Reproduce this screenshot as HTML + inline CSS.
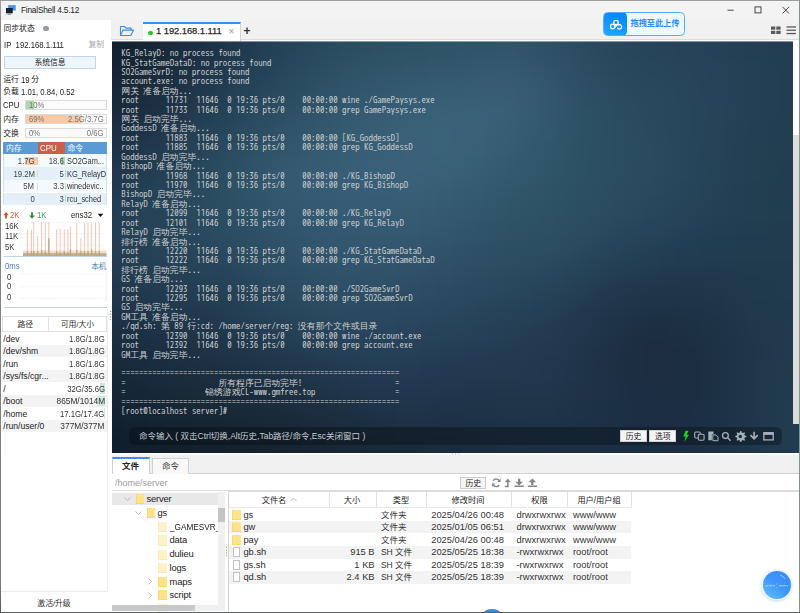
<!DOCTYPE html>
<html lang="zh-CN">
<head>
<meta charset="utf-8">
<title>FinalShell 4.5.12</title>
<style>
*{box-sizing:border-box;margin:0;padding:0}
html,body{width:800px;height:613px;overflow:hidden;background:#fff}
body{position:relative;font-family:"Liberation Sans","Noto Sans CJK SC",sans-serif;font-size:8px;color:#222;line-height:1}
.a{position:absolute}
.t{position:absolute;white-space:nowrap;line-height:10px;height:10px;letter-spacing:-.05px;font-size:7.850px;margin-top:.4px}
.l{font-size:8.6px;letter-spacing:0;margin-top:-.2px;transform:scaleX(.9);transform-origin:0 50%}
.r{text-align:right}.r.l{transform-origin:100% 50%}
.c{text-align:center}.c.l{transform-origin:50% 50%}
.g{color:#777}
.hw{color:#fff}
#win{position:absolute;left:0;top:0;width:800px;height:613px;background:#fff;overflow:hidden}
#bl{left:0;top:0;width:.9px;height:613px;background:linear-gradient(#a8a8a8 0,#8a8a8a 3%,#7a7d7d 95%,#50565a 100%)}
#bt{left:0;top:0;width:800px;height:1px;background:#9a9e9c}
#br{left:799px;top:0;width:1px;height:613px;background:#7f9486}
#bb{left:0;top:611.700px;width:800px;height:1.300px;background:#5a6065}
#title{left:1px;top:1px;width:798px;height:19px;background:#f3f3f3}
#left{left:1px;top:19.500px;width:110px;height:591.500px;background:#fff}
#tabbar{left:111px;top:20px;width:688px;height:20px;background:#f1f1f1;border-bottom:1px solid #dcdcdc}
#tab1{left:143px;top:22px;width:98px;height:18.500px;background:#fff;border-top:2px solid #3c8ef0;border-right:1px solid #d5d5d5}
#tab1 .dot{left:5px;top:6.500px;width:4.600px;height:4.600px;border-radius:50%;background:#1fc91f}
#tab1 .tt{left:13px;top:1.800px;font-size:9.400px;color:#2a2a2a;letter-spacing:-.05px;-webkit-text-stroke:.25px #2a2a2a}
#tab1 .x{left:85.500px;top:3px;font-size:10px;color:#9a9a9a}
#plus{left:243.500px;top:24.500px;font-size:12px;font-weight:bold;color:#333;line-height:12px;height:12px}
#up{left:603px;top:12px;width:81.600px;height:24px;border:1px solid #55acff;border-radius:4.500px;background:#f0f8ff;overflow:hidden}
#up .ic{left:-1px;top:-1px;width:23.600px;height:24px;border-radius:4.500px;background:linear-gradient(200deg,#068aff 20%,#25a8ff 100%)}
#up .tx{left:26.500px;top:6px;font-size:8.200px;font-weight:bold;color:#1e8fff}
.bar{position:absolute;left:25px;width:81.500px;height:10.300px;border:1px solid #dcdcdc;background:#fafafa}
.bar i{position:absolute;left:0;top:0;height:100%;display:block}
#sysbtn{left:4px;top:56.400px;width:92px;height:13px;background:#eef6fc;border:1px solid #c3d6e6}
#pt{left:3.200px;top:142px;width:103.600px;height:63.300px;border-bottom:1px solid #a9c9e6}
#pt .h{position:absolute;top:0;height:12.400px}
#pt .rw{position:absolute;left:0;width:103.600px;height:12.700px;border-left:1px solid #cfe0ee;border-right:1px solid #cfe0ee}
#dk{left:2.200px;top:315.600px;width:104.500px;height:116.500px}
#dk .hd{position:absolute;left:0;top:0;width:104.500px;height:16.200px;border:1px solid #e2e2e2;background:#fff}
#dk .rw{position:absolute;left:0;width:104.500px;height:12.540px}
#term{left:112px;top:41px;width:687px;height:412px;overflow:hidden;background:#1f364a}
#tx{left:9.300px;top:8.100px;font-family:"WenQuanYi Zen Hei Mono","IPAGothic","Noto Sans CJK SC",monospace;font-size:8.840px;line-height:9.426px;color:#d0d0d0;white-space:pre}
#cmd{left:17.300px;top:386.100px;width:652.700px;height:17.800px;border-radius:5.500px;background:rgba(2,6,10,.32)}
.cb{position:absolute;top:389.200px;height:12.300px;background:#f4f4f4;border:1px solid #cfcfcf}
#ftabs{left:112px;top:455.200px;width:687px;height:18.700px;background:#f0f0f0;border-bottom:1px solid #d2d2d2}
#ft1{left:112px;top:456.500px;width:38px;height:17.500px;background:#fff;border-top:2px solid #3c8ef0;border-left:1px solid #d0d0d0;border-right:1px solid #d0d0d0}
#ft2{left:152px;top:457.500px;width:37px;height:16px;background:#f8f8f8;border:1px solid #d0d0d0;border-bottom:none}
#pathbar{left:112px;top:474px;width:687px;height:17px;background:#fff;border-bottom:1px solid #dcdcdc}
#hist{left:460.300px;top:477px;width:26px;height:12.400px;background:#f5f5f5;border:1px solid #cdcdcd}
.f{font-size:9.350px;letter-spacing:0;line-height:11px;height:11px}
#tree{left:112px;top:491.500px;width:113px;height:119.500px;background:#fff;overflow:hidden}
#list{left:227.500px;top:491.300px;width:571.500px;height:120px;background:#fff;border-left:1px solid #d5d5d5;border-top:1px solid #dcdcdc}
.lr{position:absolute;left:228.500px;width:402px;height:12.540px;background:#f3f3f3}
.hv{position:absolute;top:492px;width:1px;height:15.500px;background:#e2e2e2}
#bg{left:-40px;top:-40px;width:782px;height:500px;filter:blur(9px)}#bg i{display:block;height:20px}
</style>
</head>
<body>
<div id="win">
<div class="a" id="title"></div>
<div class="a" id="left"></div>
<div class="a" id="tabbar"></div>
<div class="t" style="left:21px;top:5px;font-size:8.300px;letter-spacing:-.22px;color:#1a1a1a">FinalShell 4.5.12</div>
<svg class="a" style="left:5px;top:4px" width="13" height="12" viewBox="5 4 13 12"><rect x="8.200" y="5.200" width="7.500" height="5.300" fill="#3d95ec"/><rect x="6" y="8" width="6.700" height="5.300" fill="#1b1f2a"/><rect x="7.500" y="13.800" width="3.700" height=".8" fill="#666"/></svg>
<svg class="a" style="left:724px;top:2px" width="72" height="16" viewBox="724 2 72 16"><g stroke="#2a2a2a" stroke-width=".85" fill="none"><path d="M727.500 10.200h6.200"/><rect x="755" y="6.900" width="6" height="6"/><path d="M782.500 6.900l6.600 6.600M789.100 6.900l-6.600 6.600"/></g></svg>
<div class="a" id="up"><div class="a ic"></div><svg class="a" style="left:4px;top:4px" width="16" height="14" viewBox="607 16 16 14"><g fill="none" stroke="#fff" stroke-width="1.250"><circle cx="615" cy="21.600" r="2.300"/><circle cx="611.700" cy="25.400" r="2.200"/><path d="M616.800 24.300a2.200 2.200 0 1 1-.3 2.600"/><path d="M613.400 26.900l3.600-3.900"/></g></svg><div class="t tx">拖拽至此上传</div></div>
<svg class="a" style="left:770px;top:25px" width="28" height="11" viewBox="0 0 28 11"><g fill="#5a5a5a"><rect x="1" y="1.500" width="4.300" height="3.200"/><rect x="6.300" y="1.500" width="4.300" height="3.200"/><rect x="1" y="5.800" width="4.300" height="3.200"/><rect x="6.300" y="5.800" width="4.300" height="3.200"/><rect x="16.500" y="1.300" width="9.500" height="1.300"/><rect x="16.500" y="4.600" width="9.500" height="1.300"/><rect x="16.500" y="7.900" width="9.500" height="1.300"/></g></svg>
<svg class="a" style="left:119px;top:25px" width="16" height="12" viewBox="0 0 16 12"><path d="M1.500 10.500V1.500h4l1.500 1.600h5v2" fill="none" stroke="#3b8de8" stroke-width="1.100" stroke-linejoin="round"/><path d="M1.500 10.500l2.400-5.400h10.600l-2.700 5.400z" fill="none" stroke="#3b8de8" stroke-width="1.100" stroke-linejoin="round"/></svg>
<div class="a" id="tab1"><div class="a dot"></div><div class="t tt">1 192.168.1.111</div><div class="t x">×</div></div>
<div class="t" id="plus">+</div>
<div class="t " style="left:3.5px;top:23.8px;">同步状态</div>
<div class="a" style="left:43.4px;top:26.2px;width:5.2px;height:5.2px;background:#9c9c9c;border-radius:50%"></div>
<div class="t l" style="left:3.5px;top:40px;">IP&nbsp; 192.168.1.111</div>
<div class="t " style="left:88.5px;top:40px;color:#a8a8a8">复制</div>
<div class="a" id="sysbtn"></div>
<div class="t c " style="left:10px;width:80px;top:58px;">系统信息</div>
<div class="t " style="left:3.2px;top:75px;">运行</div>
<div class="t l" style="left:21.3px;top:75.2px;">19</div>
<div class="t " style="left:31.3px;top:75px;">分</div>
<div class="t " style="left:3.2px;top:86.7px;">负载</div>
<div class="t l" style="left:21.4px;top:86.9px;">1.01, 0.84, 0.52</div>
<div class="t l" style="left:3.2px;top:100.4px;">CPU</div>
<div class="bar" style="top:100.100px"><i style="width:8px;background:#a9dba9"></i></div>
<div class="t l g" style="left:28.6px;top:100.4px;">10%</div>
<div class="t " style="left:3.2px;top:114.2px;">内存</div>
<div class="bar" style="top:114px"><i style="width:56px;background:#f9c9a3"></i></div>
<div class="t l g" style="left:28.6px;top:114.4px;">69%</div>
<div class="t r l g" style="right:696.3px;top:114.4px;">2.5G/3.7G</div>
<div class="t " style="left:3.2px;top:128.2px;">交换</div>
<div class="bar" style="top:128px"></div>
<div class="t l g" style="left:28.6px;top:128.4px;">0%</div>
<div class="t r l g" style="right:696.3px;top:128.4px;">0/6G</div>
<div class="a" id="pt"><div class="h" style="left:0;width:35.300px;background:#5b9bd5"></div><div class="h" style="left:35.300px;width:26.800px;background:#c9604a"></div><div class="h" style="left:62.100px;width:41.500px;background:#5b9bd5"></div><div class="rw" style="top:12.400px;background:#f4f9fd"></div><div class="rw" style="top:25.100px;background:#e4eff8"></div><div class="rw" style="top:37.800px;background:#f4f9fd"></div><div class="rw" style="top:50.500px;background:#e4eff8"></div><div class="a" style="left:21.500px;top:15px;width:13.800px;height:8px;background:#f9c9a3"></div><div class="a" style="left:34.300px;top:28px;width:1px;height:7px;background:#f3d3b8"></div><div class="a" style="left:34.300px;top:40.500px;width:1px;height:7px;background:#f3d3b8"></div><div class="a" style="left:57.800px;top:15px;width:4.300px;height:8px;background:#a9dba9"></div><div class="a" style="left:61.400px;top:28px;width:.8px;height:7px;background:#b5dfb5"></div><div class="a" style="left:61.400px;top:40.500px;width:.8px;height:7px;background:#b5dfb5"></div><div class="a" style="left:61.400px;top:53px;width:.8px;height:7px;background:#b5dfb5"></div></div>
<div class="t hw" style="left:6px;top:143.3px;">内存</div>
<div class="t l hw" style="left:40.3px;top:142.9px;font-size:8.800px">CPU</div>
<div class="t hw" style="left:67.5px;top:143.3px;">命令</div>
<div class="t r l" style="right:765.6px;top:156.3px;color:#444">1.7G</div>
<div class="t r l" style="right:735.8px;top:156.3px;color:#444">18.6</div>
<div class="t l" style="left:67.2px;top:156.3px;color:#333;transform:scaleX(.86)">SO2Gam...</div>
<div class="t r l" style="right:765.6px;top:168.97px;color:#444">19.2M</div>
<div class="t r l" style="right:735.8px;top:168.97px;color:#444">5</div>
<div class="t l" style="left:67.2px;top:168.97px;color:#333;transform:scaleX(.86)">KG_RelayD</div>
<div class="t r l" style="right:765.6px;top:181.64px;color:#444">5M</div>
<div class="t r l" style="right:735.8px;top:181.64px;color:#444">3.3</div>
<div class="t l" style="left:67.2px;top:181.64px;color:#333;transform:scaleX(.86)">winedevic..</div>
<div class="t r l" style="right:765.6px;top:194.31px;color:#444">0</div>
<div class="t r l" style="right:735.8px;top:194.31px;color:#444">3</div>
<div class="t l" style="left:67.2px;top:194.31px;color:#333;transform:scaleX(.86)">rcu_sched</div>
<svg class="a" style="left:3px;top:211px" width="45" height="9" viewBox="0 0 45 9"><path d="M3 1L0.300 4.300h1.800v3.200h1.800V4.300h1.800z" fill="#c8501e"/><path d="M29 7.800l-2.700-3.300h1.800V1.300h1.800v3.200h1.800z" fill="#2c8a2c"/></svg>
<div class="t l" style="left:10px;top:210.4px;color:#b5613c">2K</div>
<div class="t l" style="left:37px;top:210.4px;color:#3a9a5a">1K</div>
<div class="t l" style="left:71px;top:210.4px;">ens32</div>
<svg class="a" style="left:96.500px;top:213px" width="7" height="5" viewBox="0 0 7 5"><path d="M0.700 0.800h5.600L3.500 4z" fill="#111"/></svg>
<div class="t l" style="left:5.4px;top:220.8px;color:#333">16K</div>
<div class="t l" style="left:5.4px;top:231.1px;color:#333">11K</div>
<div class="t l" style="left:5.4px;top:242.4px;color:#333">5K</div>
<svg class="a" style="left:23px;top:222px" width="84" height="35" viewBox="23 222 84 35"><path d="M23 222.5H106.500" stroke="#e3e3e3" stroke-width=".6" stroke-dasharray="1 1.500"/><path d="M23 233.5H106.500" stroke="#e3e3e3" stroke-width=".6" stroke-dasharray="1 1.500"/><path d="M23 245H106.500" stroke="#e3e3e3" stroke-width=".6" stroke-dasharray="1 1.500"/><rect x="23" y="250.500" width="83.500" height="5.700" fill="#fad9cc"/><rect x="26.79" y="229.24" width="1" height="26.96" fill="#f7c3b1"/><rect x="30.92" y="230.13" width="1" height="26.07" fill="#f7c3b1"/><rect x="33.25" y="222.06" width="1" height="34.14" fill="#f7c3b1"/><rect x="37.2" y="235.52" width="1" height="20.68" fill="#f7c3b1"/><rect x="41.15" y="222.06" width="1" height="34.14" fill="#f7c3b1"/><rect x="44.74" y="222.95" width="1" height="33.25" fill="#f7c3b1"/><rect x="48.33" y="222.06" width="1" height="34.14" fill="#f7c3b1"/><rect x="56.05" y="229.24" width="1" height="26.96" fill="#f7c3b1"/><rect x="59.64" y="228.34" width="1" height="27.86" fill="#f7c3b1"/><rect x="63.77" y="229.24" width="1" height="26.96" fill="#f7c3b1"/><rect x="67.36" y="229.24" width="1" height="26.96" fill="#f7c3b1"/><rect x="69.88" y="226.54" width="1" height="29.66" fill="#f7c3b1"/><rect x="76.34" y="222.95" width="1" height="33.25" fill="#f7c3b1"/><rect x="80.29" y="238.21" width="1" height="17.99" fill="#f7c3b1"/><rect x="83.88" y="222.95" width="1" height="33.25" fill="#f7c3b1"/><rect x="87.47" y="222.95" width="1" height="33.25" fill="#f7c3b1"/><rect x="91.06" y="222.95" width="1" height="33.25" fill="#f7c3b1"/><rect x="95.01" y="222.95" width="1" height="33.25" fill="#f7c3b1"/><rect x="98.78" y="222.95" width="1" height="33.25" fill="#f7c3b1"/><rect x="23" y="253.200" width="83.500" height="3" fill="#bcb08a"/><rect x="26.69" y="251.2" width="1.300" height="5" fill="#b5a87c"/><rect x="30.82" y="251.2" width="1.300" height="5" fill="#b5a87c"/><rect x="33.15" y="251.2" width="1.300" height="5" fill="#b5a87c"/><rect x="37.1" y="251.2" width="1.300" height="5" fill="#b5a87c"/><rect x="41.05" y="250.2" width="1.300" height="6" fill="#b5a87c"/><rect x="44.64" y="251.2" width="1.300" height="5" fill="#b5a87c"/><rect x="48.23" y="238.2" width="1.300" height="18" fill="#b5a87c"/><rect x="55.95" y="251.2" width="1.300" height="5" fill="#b5a87c"/><rect x="59.54" y="252.2" width="1.300" height="4" fill="#b5a87c"/><rect x="63.67" y="251.2" width="1.300" height="5" fill="#b5a87c"/><rect x="67.26" y="252.2" width="1.300" height="4" fill="#b5a87c"/><rect x="69.78" y="249.2" width="1.300" height="7" fill="#b5a87c"/><rect x="76.24" y="250.2" width="1.300" height="6" fill="#b5a87c"/><rect x="80.19" y="251.2" width="1.300" height="5" fill="#b5a87c"/><rect x="83.78" y="251.2" width="1.300" height="5" fill="#b5a87c"/><rect x="87.37" y="251.2" width="1.300" height="5" fill="#b5a87c"/><rect x="90.96" y="249.2" width="1.300" height="7" fill="#b5a87c"/><rect x="94.91" y="251.2" width="1.300" height="5" fill="#b5a87c"/><rect x="98.68" y="251.2" width="1.300" height="5" fill="#b5a87c"/></svg>
<div class="a" style="left:3.5px;top:256.3px;width:103px;height:1px;background:#bcd3ea;"></div>
<div class="t l" style="left:4.5px;top:261.6px;color:#4a80b8">0ms</div>
<div class="t r " style="right:693.7px;top:261.4px;color:#4a80b8;font-size:7.600px">本机</div>
<div class="t l" style="left:6.5px;top:271.7px;color:#333">0</div>
<div class="t l" style="left:6.5px;top:281.6px;color:#333">0</div>
<div class="t l" style="left:6.5px;top:292.3px;color:#333">0</div>
<svg class="a" style="left:19px;top:272px" width="88" height="30" viewBox="19 272 88 30"><g stroke="#e1e1e1" stroke-width=".7" stroke-dasharray="1 1.500"><path d="M20 274.200H106M20 286.700H106M20 298.400H106"/></g><path d="M106.200 272V302" stroke="#e6edf4" stroke-width=".8"/></svg>
<div class="a" style="left:3.5px;top:306.8px;width:103px;height:1px;background:#bcd3ea;"></div>
<div class="a" id="dk"><div class="hd"></div><div class="a" style="left:46px;top:0;width:1px;height:16px;background:#e2e2e2"></div><div class="rw" style="top:16.4px;background:#fff"></div><div class="rw" style="top:28.94px;background:#f3f3f3"></div><div class="rw" style="top:41.48px;background:#fff"></div><div class="rw" style="top:54.02px;background:#f3f3f3"></div><div class="rw" style="top:66.56px;background:#fff"></div><div class="rw" style="top:79.1px;background:#f3f3f3"></div><div class="rw" style="top:91.64px;background:#fff"></div><div class="rw" style="top:104.18px;background:#f3f3f3"></div><div class="a" style="left:97.800px;top:67.500px;width:5px;height:10.500px;background:#cfe6dc"></div><div class="a" style="left:94.600px;top:80px;width:8.200px;height:10.500px;background:#cfe6dc"></div><div class="a" style="left:102px;top:92.600px;width:.8px;height:10.500px;background:#cfe6dc"></div></div>
<div class="t c " style="left:5.3px;width:40px;top:319.4px;color:#333">路径</div>
<div class="t c " style="left:52.4px;width:50px;top:319.4px;color:#333">可用/大小</div>
<div class="t l" style="left:3.3px;top:333.9px;color:#222;transform:none">/dev</div>
<div class="t r l" style="right:695.3px;top:333.9px;color:#333">1.8G/1.8G</div>
<div class="t l" style="left:3.3px;top:346.44px;color:#222;transform:none">/dev/shm</div>
<div class="t r l" style="right:695.3px;top:346.44px;color:#333">1.8G/1.8G</div>
<div class="t l" style="left:3.3px;top:358.98px;color:#222;transform:none">/run</div>
<div class="t r l" style="right:695.3px;top:358.98px;color:#333">1.8G/1.8G</div>
<div class="t l" style="left:3.3px;top:371.52px;color:#222;transform:none">/sys/fs/cgr...</div>
<div class="t r l" style="right:695.3px;top:371.52px;color:#333">1.8G/1.8G</div>
<div class="t l" style="left:3.3px;top:384.06px;color:#222;transform:none">/</div>
<div class="t r l" style="right:695.3px;top:384.06px;color:#333">32G/35.6G</div>
<div class="t l" style="left:3.3px;top:396.6px;color:#222;transform:none">/boot</div>
<div class="t r l" style="right:695.3px;top:396.6px;color:#333;transform:scaleX(.97)">865M/1014M</div>
<div class="t l" style="left:3.3px;top:409.14px;color:#222;transform:none">/home</div>
<div class="t r l" style="right:695.3px;top:409.14px;color:#333">17.1G/17.4G</div>
<div class="t l" style="left:3.3px;top:421.68px;color:#222;transform:none">/run/user/0</div>
<div class="t r l" style="right:695.3px;top:421.68px;color:#333;transform:scaleX(.97)">377M/377M</div>
<div class="a" style="left:106.5px;top:308px;width:1px;height:283.5px;background:#ebebeb;"></div>
<div class="a" style="left:1px;top:591px;width:106.5px;height:1px;background:#ebebeb;"></div>
<svg class="a" style="left:108.500px;top:310px" width="3" height="11" viewBox="0 0 3 11"><g fill="#9a9a9a"><circle cx="1.500" cy="1.500" r=".7"/><circle cx="1.500" cy="4.200" r=".7"/><circle cx="1.500" cy="6.900" r=".7"/><circle cx="1.500" cy="9.600" r=".7"/></g></svg>
<div class="t c " style="left:24px;width:60px;top:599px;color:#333">激活/升级</div>
<div class="a" id="term">
<div class="a" id="bg"><i style="background:linear-gradient(90deg,#12202e,#12202e,#142433,#18293c,#1c3145,#1f394d,#234054,#27475b,#2a4c5f,#2b4f62,#2d5164,#2d5265,#2f5368,#305368,#2e4f65,#2b4a5f,#28465b,#274459,#264257,#254056,#243f54,#233e52,#233d51,#233d51)"></i><i style="background:linear-gradient(90deg,#12202e,#12202e,#142433,#18293c,#1c3145,#1f394d,#234054,#27475b,#2a4c5f,#2b4f62,#2d5164,#2d5265,#2f5368,#305368,#2e4f65,#2b4a5f,#28465b,#274459,#264257,#254056,#243f54,#233e52,#233d51,#233d51)"></i><i style="background:linear-gradient(90deg,#12212f,#12212f,#152534,#192b3d,#1c3246,#203a4f,#244256,#28485c,#2b4d61,#2d5064,#2e5266,#2f5367,#30556a,#31556b,#2f5167,#2b4b60,#29475c,#27445a,#264258,#254156,#243f54,#233e52,#233e51,#233e51)"></i><i style="background:linear-gradient(90deg,#152333,#152333,#182738,#1b2e40,#1e354a,#223e53,#26455a,#2a4c60,#2d5165,#2f5569,#31576b,#32586d,#345970,#345970,#31546b,#2d4d63,#29485d,#28465b,#27445a,#264257,#244054,#233e52,#233e52,#233e52)"></i><i style="background:linear-gradient(90deg,#172637,#172637,#1a2a3b,#1d3144,#21394e,#244257,#28495d,#2c4f64,#305569,#32586e,#345b71,#355c73,#375d74,#375d74,#33576e,#2d4f65,#2a4a5f,#29475d,#27455b,#264258,#244054,#233e52,#233e51,#233e51)"></i><i style="background:linear-gradient(90deg,#19293b,#19293b,#1c2d40,#203548,#233e52,#27465b,#2b4d62,#2f5368,#32586e,#355c72,#375e75,#386077,#386077,#385e76,#32586e,#2d5165,#2a4c60,#29485e,#28465b,#264358,#244054,#233e51,#223e51,#223e51)"></i><i style="background:linear-gradient(90deg,#1b2d41,#1b2d41,#1e3246,#223a4e,#254257,#294a5f,#2e5166,#32576c,#355b71,#375e75,#396178,#3a6279,#396078,#365d74,#31576c,#2c5165,#2b4d61,#29495e,#28465b,#264257,#233f53,#223e51,#223e50,#223e50)"></i><i style="background:linear-gradient(90deg,#1d3146,#1d3146,#20364b,#243e52,#27465a,#2c4e63,#30556b,#345a70,#365d74,#385f77,#3a6179,#3a6279,#375f76,#345b71,#2f566a,#2c5164,#2b4d61,#294a5f,#28465b,#254256,#233f52,#223e50,#223e50,#223e50)"></i><i style="background:linear-gradient(90deg,#1f354b,#1f354b,#223b50,#254256,#29495d,#2d5166,#32576e,#365b73,#375e76,#386078,#396179,#386077,#355d73,#32596d,#2e5568,#2c5064,#2b4d61,#2a4a5e,#27465b,#254256,#233f52,#223d50,#223d50,#223d50)"></i><i style="background:linear-gradient(90deg,#21394e,#21394e,#233f54,#274559,#2a4b5f,#2e5267,#32576e,#365b74,#375d76,#385e77,#385f77,#365d74,#335a6f,#30566a,#2e5366,#2c5063,#2b4c60,#29495e,#27455a,#244155,#223e51,#223d50,#213d4f,#213d4f)"></i><i style="background:linear-gradient(90deg,#233c51,#233c51,#254156,#27465b,#2a4b60,#2d5166,#31566d,#335972,#355b75,#365c75,#365c74,#345a71,#31576c,#2e5467,#2d5265,#2b4e62,#2a4a5f,#28475c,#264358,#244054,#223e51,#213d50,#213d4f,#213d4f)"></i><i style="background:linear-gradient(90deg,#243e52,#243e52,#254256,#27455a,#294a5f,#2c4f64,#2f536b,#31566f,#335972,#345a72,#345971,#32576d,#2f5469,#2d5165,#2d5063,#2b4c60,#28475c,#274459,#244056,#223e53,#213d50,#213c4f,#213d4f,#213d4f)"></i><i style="background:linear-gradient(90deg,#243d51,#243d51,#254055,#264459,#28475c,#2a4c61,#2d5067,#30546c,#31566e,#32566f,#31556d,#30536a,#2e5066,#2c4e63,#2b4d61,#29485d,#264358,#243f54,#223d52,#213c50,#213b4f,#213c4f,#213c4f,#213c4f)"></i><i style="background:linear-gradient(90deg,#223b4e,#223b4e,#243e53,#254056,#264358,#29485d,#2c4d63,#2e5168,#2f536a,#30536b,#2f5169,#2e4f66,#2c4c62,#2a4a5f,#29485d,#264358,#233e53,#223b4f,#20394e,#20394e,#203a4e,#213b4e,#213c4f,#213c4f)"></i><i style="background:linear-gradient(90deg,#21374a,#21374a,#223a4f,#223c52,#243f54,#264358,#2a495f,#2c4e63,#2d4f66,#2d4e66,#2d4d65,#2b4b62,#2a485f,#28465c,#274358,#243e53,#21384d,#1f364a,#1f3649,#1f374a,#20394c,#203b4e,#213c4e,#213c4e)"></i><i style="background:linear-gradient(90deg,#1e3346,#1e3346,#1f354b,#20384e,#223a50,#243f54,#27455a,#2a495e,#2b4a61,#2b4a62,#2a4960,#29475e,#28445b,#264258,#253f54,#21394f,#1f3449,#1d3245,#1d3245,#1e3547,#1f384a,#203a4d,#213b4e,#213b4e)"></i><i style="background:linear-gradient(90deg,#1c2f40,#1c2f40,#1c3146,#1e344a,#20364b,#223a4f,#243f54,#274358,#28455b,#28455d,#28445c,#274259,#264057,#253e54,#233b51,#20374c,#1d3245,#1c2f41,#1c3041,#1d3345,#1f3749,#213a4d,#213b4e,#213b4e)"></i><i style="background:linear-gradient(90deg,#1a2b3b,#1a2b3b,#1a2d41,#1c3045,#1e3346,#1f354a,#21394e,#243d52,#254056,#254158,#254057,#243e55,#243d53,#233b51,#22394f,#1f354a,#1d3044,#1b2d3f,#1b2e3f,#1d3244,#1f3649,#213a4d,#213c4e,#213c4e)"></i><i style="background:linear-gradient(90deg,#172838,#172838,#182a3c,#1a2d3f,#1c2f40,#1d3144,#1e3448,#20374c,#223a50,#233c53,#233c53,#223a50,#22394f,#22394e,#21374d,#1f3449,#1d3043,#1b2d3f,#1b2e3f,#1d3144,#1f3649,#213b4d,#213c4f,#213c4f)"></i><i style="background:linear-gradient(90deg,#152534,#152534,#162738,#182a3a,#1a2c3b,#1b2d3e,#1c2f42,#1d3245,#1f3549,#20374d,#20384e,#20364c,#20364b,#20364b,#20364b,#1f3348,#1d3044,#1b2d40,#1b2e40,#1d3144,#1f364a,#213b4e,#223c4f,#223c4f)"></i><i style="background:linear-gradient(90deg,#122332,#122332,#142434,#162635,#182836,#182939,#192b3b,#1b2d3e,#1c3043,#1d3347,#1e3449,#1e3348,#1e3348,#1f3448,#1f3449,#1e3247,#1c3044,#1b2e42,#1b2e42,#1d3145,#1f364a,#213b4f,#223d50,#223d50)"></i><i style="background:linear-gradient(90deg,#10202f,#10202f,#112130,#132331,#152432,#162533,#172735,#182938,#1a2b3c,#1b2e40,#1c2f42,#1c2f43,#1d3044,#1d3145,#1d3246,#1d3146,#1c2f45,#1b2e43,#1b2e43,#1c3146,#1f364b,#213c50,#223d51,#223d51)"></i><i style="background:linear-gradient(90deg,#0e1d2c,#0e1d2c,#0f1f2d,#11202d,#13212e,#14222f,#152330,#162533,#172736,#182938,#192a3a,#1a2c3d,#1b2d3f,#1c2e42,#1c2f44,#1c3044,#1b2f44,#1b2e43,#1b2e44,#1c3147,#1e364b,#213c50,#213d51,#213d51)"></i><i style="background:linear-gradient(90deg,#0e1d2c,#0e1d2c,#0f1f2d,#11202d,#13212e,#14222f,#152330,#162533,#172736,#182938,#192a3a,#1a2c3d,#1b2d3f,#1c2e42,#1c2f44,#1c3044,#1b2f44,#1b2e43,#1b2e44,#1c3147,#1e364b,#213c50,#213d51,#213d51)"></i><i style="background:linear-gradient(90deg,#0e1d2c,#0e1d2c,#0f1f2d,#11202d,#13212e,#14222f,#152330,#162533,#172736,#182938,#192a3a,#1a2c3d,#1b2d3f,#1c2e42,#1c2f44,#1c3044,#1b2f44,#1b2e43,#1b2e44,#1c3147,#1e364b,#213c50,#213d51,#213d51)"></i></div>
<pre class="a" id="tx">KG_RelayD: no process found
KG_StatGameDataD: no process found
SO2GameSvrD: no process found
account.exe: no process found
网关 准备启动...
root      11731  11646  0 19:36 pts/0    00:00:00 wine ./GamePaysys.exe
root      11733  11646  0 19:36 pts/0    00:00:00 grep GamePaysys.exe
网关 启动完毕...
GoddessD 准备启动...
root      11883  11646  0 19:36 pts/0    00:00:00 [KG_GoddessD]
root      11885  11646  0 19:36 pts/0    00:00:00 grep KG_GoddessD
GoddessD 启动完毕...
BishopD 准备启动...
root      11968  11646  0 19:36 pts/0    00:00:00 ./KG_BishopD
root      11970  11646  0 19:36 pts/0    00:00:00 grep KG_BishopD
BishopD 启动完毕...
RelayD 准备启动...
root      12099  11646  0 19:36 pts/0    00:00:00 ./KG_RelayD
root      12101  11646  0 19:36 pts/0    00:00:00 grep KG_RelayD
RelayD 启动完毕...
排行榜 准备启动...
root      12220  11646  0 19:36 pts/0    00:00:00 ./KG_StatGameDataD
root      12222  11646  0 19:36 pts/0    00:00:00 grep KG_StatGameDataD
排行榜 启动完毕...
GS 准备启动...
root      12293  11646  0 19:36 pts/0    00:00:00 ./SO2GameSvrD
root      12295  11646  0 19:36 pts/0    00:00:00 grep SO2GameSvrD
GS 启动完毕...
GM工具 准备启动...
./qd.sh: 第 89 行:cd: /home/server/reg: 没有那个文件或目录
root      12390  11646  0 19:36 pts/0    00:00:00 wine ./account.exe
root      12392  11646  0 19:36 pts/0    00:00:00 grep account.exe
GM工具 启动完毕...

===============================================================
=                     所有程序已启动完毕!                     =
=                  锦绣游戏CL-www.gmfree.top                  =
===============================================================
[root@localhost server]#</pre>
<div class="a" style="left:0;top:0;width:687px;height:1px;background:rgba(255,255,255,.45)"></div>
<div class="a" id="cmd"></div>
<div class="t" style="left:27px;top:389.500px;font-size:8.500px;color:#c4ccd4;letter-spacing:0">命令输入 ( 双击Ctrl切换,Alt历史,Tab路径/命令,Esc关闭窗口 )</div>
<div class="cb" style="left:508.100px;width:27px"></div><div class="cb" style="left:537.400px;width:26.600px"></div>
<div class="t c" style="left:508.100px;width:27px;top:390.500px;color:#222">历史</div><div class="t c" style="left:537.400px;width:26.600px;top:390.500px;color:#222">选项</div>
<svg class="a" style="left:568px;top:388px" width="96" height="15" viewBox="680 429 96 15">
<path d="M685.500 430.800h3l-1.700 4h2.200l-4.700 7 1.300-5.200h-2.300z" fill="#1fd01f"/>
<g fill="none" stroke="#a6b0b9" stroke-width="1.100"><rect x="694.700" y="432" width="5.600" height="6" rx="1.200"/><rect x="698.300" y="434.300" width="5.800" height="6" rx="1.200" fill="#172a3a"/></g>
<path d="M708.300 431.500h5.200v2.700h-1.600v6h-3.600z" fill="#a6b0b9"/><path d="M712.800 434.900h3.200l2 2v3.800h-5.200z" fill="#172a3a" stroke="#a6b0b9" stroke-width="1"/>
<g fill="none" stroke="#a6b0b9" stroke-width="1.300"><circle cx="725.400" cy="435.600" r="2.900"/><path d="M727.600 437.800l3 3"/></g>
<g fill="#a6b0b9"><path d="M740.250 431l1.100 0 .4 1.500 1.200.5 1.350-.8.800.8-.8 1.350.5 1.200 1.500.4v1.100l-1.500.4-.5 1.200.8 1.350-.8.800-1.350-.8-1.200.5-.4 1.500h-1.100l-.4-1.500-1.200-.5-1.350.8-.8-.8.800-1.350-.5-1.200-1.500-.4v-1.100l1.500-.4.500-1.200-.8-1.350.8-.8 1.350.8 1.200-.5z"/></g><circle cx="740.300" cy="436.500" r="1.700" fill="#172a3a"/>
<path d="M753.300 431.800h1.600v5l2.200-2.200 1.200 1.200-4.200 4.200-4.200-4.200 1.200-1.200 2.200 2.200z" fill="#a6b0b9"/>
<rect x="763.800" y="432.700" width="9.400" height="7.200" fill="none" stroke="#a6b0b9" stroke-width="1.300"/><rect x="763.800" y="432.700" width="9.400" height="2.200" fill="#a6b0b9"/>
</svg>
<div class="a" style="left:681px;top:0px;width:6px;height:383px;background:#fff;"></div>
<div class="a" style="left:681px;top:94px;width:5.5px;height:289px;background:#dcdcdc;"></div>
</div>
<div class="a" style="left:112px;top:452.6px;width:687px;height:2.8px;background:#fff;"></div>
<svg class="a" style="left:451px;top:453px" width="10" height="2" viewBox="451 453 10 2"><g fill="#9a9a9a"><circle cx="452.500" cy="454" r=".6"/><circle cx="455.700" cy="454" r=".6"/><circle cx="458.900" cy="454" r=".6"/></g></svg>
<div class="a" id="ftabs"></div><div class="a" id="ft1"></div><div class="a" id="ft2"></div>
<div class="t c " style="left:115.5px;width:30px;top:460.6px;font-weight:bold;color:#222;font-size:8.500px">文件</div>
<div class="t c " style="left:155.5px;width:30px;top:460.8px;color:#333;font-size:8.500px">命令</div>
<div class="a" id="pathbar"></div>
<div class="t f" style="left:114.9px;top:477.8px;color:#9a9a9a;font-size:9px">/home/server</div>
<div class="a" id="hist"></div>
<div class="t c " style="left:460.3px;width:26px;top:478.2px;color:#222">历史</div>
<svg class="a" style="left:490px;top:477px" width="49" height="12" viewBox="490 477 49 12"><g fill="none" stroke="#858585" stroke-width="1.400"><path d="M499.600 481.400a3.600 3.600 0 0 0-6.400-.7"/><path d="M492.900 484.300a3.600 3.600 0 0 0 6.400.7"/></g><path d="M500.600 478.800v3.300h-3.300zM491.900 486.900v-3.300h3.300z" fill="#858585"/>
<path d="M507.800 478.600l3 3.700h-2.200v4.900h-3.800v-1.400h2.300v-3.500h-2.300z" fill="#858585"/>
<path d="M518 478.700h2.300v3h2.700l-3.850 3.700-3.850-3.700h2.700zM514.400 485.600h9.400v1.500h-9.400z" fill="#858585"/>
<path d="M531.200 485h2.300v-2.700h2.700l-3.850-3.700-3.850 3.700h2.700zM527.700 485.600h9.400v1.500h-9.400z" fill="#858585"/></svg>
<div class="a" id="tree"></div>
<div class="a" style="left:112px;top:492.6px;width:106px;height:12.5px;background:#e8e8e8;"></div>
<div class="a" style="left:135.5px;top:493.9px;width:8.3px;height:10.2px;background:#ffe28a;border-left:1.500px solid #ffd764;border-bottom:1.500px solid #ffd764;border-radius:.5px"></div>
<div class="t f" style="left:146.5px;top:493.5px;color:#222;letter-spacing:-.15px">server</div>
<svg class="a" style="left:123.8px;top:495.5px" width="7" height="7" viewBox="0 0 7 7"><path d="M0.500 1.500L3.500 4.500 6.500 1.500" fill="none" stroke="#b5b5b5" stroke-width=".9"/></svg>
<div class="a" style="left:146.5px;top:508px;width:8.3px;height:10.2px;background:#ffe28a;border-left:1.500px solid #ffd764;border-bottom:1.500px solid #ffd764;border-radius:.5px"></div>
<div class="t f" style="left:157.5px;top:507.6px;color:#222;letter-spacing:-.15px">gs</div>
<svg class="a" style="left:135.3px;top:509.6px" width="7" height="7" viewBox="0 0 7 7"><path d="M0.500 1.500L3.500 4.500 6.500 1.500" fill="none" stroke="#b5b5b5" stroke-width=".9"/></svg>
<div class="a" style="left:158.3px;top:521.8px;width:8.3px;height:10.2px;background:#fff1c9;border-left:1.500px solid #ffe9a8;border-bottom:1.500px solid #ffe9a8;border-radius:.5px"></div>
<div class="t f" style="left:169.5px;top:521.4px;color:#222;transform:scaleX(.88);transform-origin:0 50%">_GAMESVR_</div>
<div class="a" style="left:158.3px;top:535.4px;width:8.3px;height:10.2px;background:#fff1c9;border-left:1.500px solid #ffe9a8;border-bottom:1.500px solid #ffe9a8;border-radius:.5px"></div>
<div class="t f" style="left:169.5px;top:535px;color:#222;letter-spacing:-.15px">data</div>
<div class="a" style="left:158.3px;top:549.5px;width:8.3px;height:10.2px;background:#fff1c9;border-left:1.500px solid #ffe9a8;border-bottom:1.500px solid #ffe9a8;border-radius:.5px"></div>
<div class="t f" style="left:169.5px;top:549.1px;color:#222;letter-spacing:-.15px">dulieu</div>
<div class="a" style="left:158.3px;top:563.1px;width:8.3px;height:10.2px;background:#fff1c9;border-left:1.500px solid #ffe9a8;border-bottom:1.500px solid #ffe9a8;border-radius:.5px"></div>
<div class="t f" style="left:169.5px;top:562.7px;color:#222;letter-spacing:-.15px">logs</div>
<div class="a" style="left:158.3px;top:576.7px;width:8.3px;height:10.2px;background:#ffe28a;border-left:1.500px solid #ffd764;border-bottom:1.500px solid #ffd764;border-radius:.5px"></div>
<div class="t f" style="left:169.5px;top:576.3px;color:#222;letter-spacing:-.15px">maps</div>
<svg class="a" style="left:146.8px;top:578.3px" width="7" height="7" viewBox="0 0 7 7"><path d="M1.500 0.500L4.500 3.500 1.500 6.500" fill="none" stroke="#b5b5b5" stroke-width=".9"/></svg>
<div class="a" style="left:158.3px;top:590.3px;width:8.3px;height:10.2px;background:#ffe28a;border-left:1.500px solid #ffd764;border-bottom:1.500px solid #ffd764;border-radius:.5px"></div>
<div class="t f" style="left:169.5px;top:589.9px;color:#222;letter-spacing:-.15px">script</div>
<svg class="a" style="left:146.8px;top:591.9px" width="7" height="7" viewBox="0 0 7 7"><path d="M1.500 0.500L4.500 3.500 1.500 6.500" fill="none" stroke="#b5b5b5" stroke-width=".9"/></svg>
<div class="a" style="left:158.3px;top:603.9px;width:8.3px;height:10.2px;background:#fff1c9;border-left:1.500px solid #ffe9a8;border-bottom:1.500px solid #ffe9a8;border-radius:.5px"></div>
<div class="a" style="left:218px;top:491.5px;width:7px;height:113.5px;background:#f0f0f0;"></div>
<div class="a" style="left:218px;top:507.8px;width:7px;height:14.2px;background:#c4c4c4;"></div>
<div class="a" style="left:112px;top:605px;width:113px;height:6px;background:#f0f0f0;"></div>
<div class="a" style="left:112px;top:605px;width:83px;height:6px;background:#c8c8c8;"></div>
<svg class="a" style="left:225.200px;top:546px" width="3" height="11" viewBox="0 0 3 11"><g fill="#9a9a9a"><circle cx="1.500" cy="1.500" r=".6"/><circle cx="1.500" cy="4.200" r=".6"/><circle cx="1.500" cy="6.900" r=".6"/><circle cx="1.500" cy="9.600" r=".6"/></g></svg>
<div class="a" id="list"></div>
<div class="a" style="left:228.5px;top:507.3px;width:402px;height:1px;background:#e8e8e8;"></div>
<div class="hv" style="left:328.6px"></div>
<div class="hv" style="left:376px"></div>
<div class="hv" style="left:426.2px"></div>
<div class="hv" style="left:511px"></div>
<div class="hv" style="left:567px"></div>
<div class="hv" style="left:630.6px"></div>
<div class="lr" style="top:520.94px"></div>
<div class="lr" style="top:546.02px"></div>
<div class="lr" style="top:571.1px"></div>
<div class="t f c" style="left:254px;width:40px;top:494.3px;color:#222;font-size:8.200px">文件名</div>
<svg class="a" style="left:289.500px;top:497px" width="7" height="5" viewBox="0 0 7 5"><path d="M0.500 4L3.500 1 6.500 4" fill="none" stroke="#aaa" stroke-width=".8"/></svg>
<div class="t f c" style="left:332px;width:40px;top:494.3px;color:#222;font-size:8.200px">大小</div>
<div class="t f c" style="left:381px;width:40px;top:494.3px;color:#222;font-size:8.200px">类型</div>
<div class="t f c" style="left:438px;width:60px;top:494.3px;color:#222;font-size:8.200px">修改时间</div>
<div class="t f c" style="left:519.4px;width:40px;top:494.3px;color:#222;font-size:8.200px">权限</div>
<div class="t f c" style="left:569px;width:60px;top:494.3px;color:#222;font-size:8.200px">用户/用户组</div>
<div class="a" style="left:232.4px;top:509.8px;width:8.2px;height:9.8px;background:#ffe28a;border-left:1.500px solid #ffd764;border-bottom:1.500px solid #ffd764;border-radius:.5px"></div>
<div class="t f" style="left:243.4px;top:509.2px;color:#2c2c2c">gs</div>
<div class="t f" style="left:380.9px;top:509.2px;color:#333;font-size:8.500px">文件夹</div>
<div class="t f" style="left:431.2px;top:509.2px;color:#333">2025/04/26 00:48</div>
<div class="t f" style="left:516.4px;top:509.2px;color:#333;letter-spacing:.05px">drwxrwxrwx</div>
<div class="t f" style="left:573px;top:509.2px;color:#333">www/www</div>
<div class="a" style="left:232.4px;top:522.34px;width:8.2px;height:9.8px;background:#ffe28a;border-left:1.500px solid #ffd764;border-bottom:1.500px solid #ffd764;border-radius:.5px"></div>
<div class="t f" style="left:243.4px;top:521.74px;color:#2c2c2c">gw</div>
<div class="t f" style="left:380.9px;top:521.74px;color:#333;font-size:8.500px">文件夹</div>
<div class="t f" style="left:431.2px;top:521.74px;color:#333">2025/01/05 06:51</div>
<div class="t f" style="left:516.4px;top:521.74px;color:#333;letter-spacing:.05px">drwxrwxrwx</div>
<div class="t f" style="left:573px;top:521.74px;color:#333">www/www</div>
<div class="a" style="left:232.4px;top:534.88px;width:8.2px;height:9.8px;background:#ffe28a;border-left:1.500px solid #ffd764;border-bottom:1.500px solid #ffd764;border-radius:.5px"></div>
<div class="t f" style="left:243.4px;top:534.28px;color:#2c2c2c">pay</div>
<div class="t f" style="left:380.9px;top:534.28px;color:#333;font-size:8.500px">文件夹</div>
<div class="t f" style="left:431.2px;top:534.28px;color:#333">2025/04/26 00:48</div>
<div class="t f" style="left:516.4px;top:534.28px;color:#333;letter-spacing:.05px">drwxrwxrwx</div>
<div class="t f" style="left:573px;top:534.28px;color:#333">www/www</div>
<div class="a" style="left:233px;top:547.32px;width:7.300px;height:10px;background:#fff;border:1px solid #c2c2c2;border-radius:.5px"></div>
<div class="t f" style="left:243.4px;top:546.82px;color:#2c2c2c">gb.sh</div>
<div class="t f r" style="right:425.4px;top:546.82px;color:#333">915 B</div>
<div class="t f" style="left:380.9px;top:546.82px;color:#333;font-size:8.500px">SH 文件</div>
<div class="t f" style="left:431.2px;top:546.82px;color:#333">2025/05/25 18:38</div>
<div class="t f" style="left:516.4px;top:546.82px;color:#333;letter-spacing:.05px">-rwxrwxrwx</div>
<div class="t f" style="left:573px;top:546.82px;color:#333">root/root</div>
<div class="a" style="left:233px;top:559.86px;width:7.300px;height:10px;background:#fff;border:1px solid #c2c2c2;border-radius:.5px"></div>
<div class="t f" style="left:243.4px;top:559.36px;color:#2c2c2c">gs.sh</div>
<div class="t f r" style="right:425.4px;top:559.36px;color:#333">1 KB</div>
<div class="t f" style="left:380.9px;top:559.36px;color:#333;font-size:8.500px">SH 文件</div>
<div class="t f" style="left:431.2px;top:559.36px;color:#333">2025/05/25 18:39</div>
<div class="t f" style="left:516.4px;top:559.36px;color:#333;letter-spacing:.05px">-rwxrwxrwx</div>
<div class="t f" style="left:573px;top:559.36px;color:#333">root/root</div>
<div class="a" style="left:233px;top:572.4px;width:7.300px;height:10px;background:#fff;border:1px solid #c2c2c2;border-radius:.5px"></div>
<div class="t f" style="left:243.4px;top:571.9px;color:#2c2c2c">qd.sh</div>
<div class="t f r" style="right:425.4px;top:571.9px;color:#333">2.4 KB</div>
<div class="t f" style="left:380.9px;top:571.9px;color:#333;font-size:8.500px">SH 文件</div>
<div class="t f" style="left:431.2px;top:571.9px;color:#333">2025/05/25 18:39</div>
<div class="t f" style="left:516.4px;top:571.9px;color:#333;letter-spacing:.05px">-rwxrwxrwx</div>
<div class="t f" style="left:573px;top:571.9px;color:#333">root/root</div>
<div class="a" style="left:760.5px;top:569px;width:31px;height:31px;background:rgba(235,242,250,.9);border-radius:50%;box-shadow:0 1px 3px rgba(120,140,170,.35)"></div>
<div class="a" style="left:762.5px;top:570.5px;width:28px;height:28px;background:linear-gradient(35deg,#63c2ff 0,#3e97fb 50%,#3a86f6 100%);border-radius:50%"></div>
<svg class="a" style="left:762.500px;top:570.500px" width="28" height="28" viewBox="0 0 28 28"><g stroke="#cfe6ff" stroke-width=".8" fill="none"><path d="M2.500 14.800H12M16 14.800H25" stroke-dasharray="3 .6"/><path d="M17 4.200l3 1.200 2.300 2.600" stroke-width=".7"/><path d="M14 12.500v1M14 16v1.200" stroke-width=".7"/></g></svg>
<div class="a" style="left:482.5px;top:608.6px;width:18.5px;height:10px;background:#2f8cf0;border-radius:50%"></div>
<div class="a" id="bl"></div><div class="a" id="bt"></div><div class="a" id="br"></div><div class="a" id="bb"></div>
</div>
</body>
</html>
